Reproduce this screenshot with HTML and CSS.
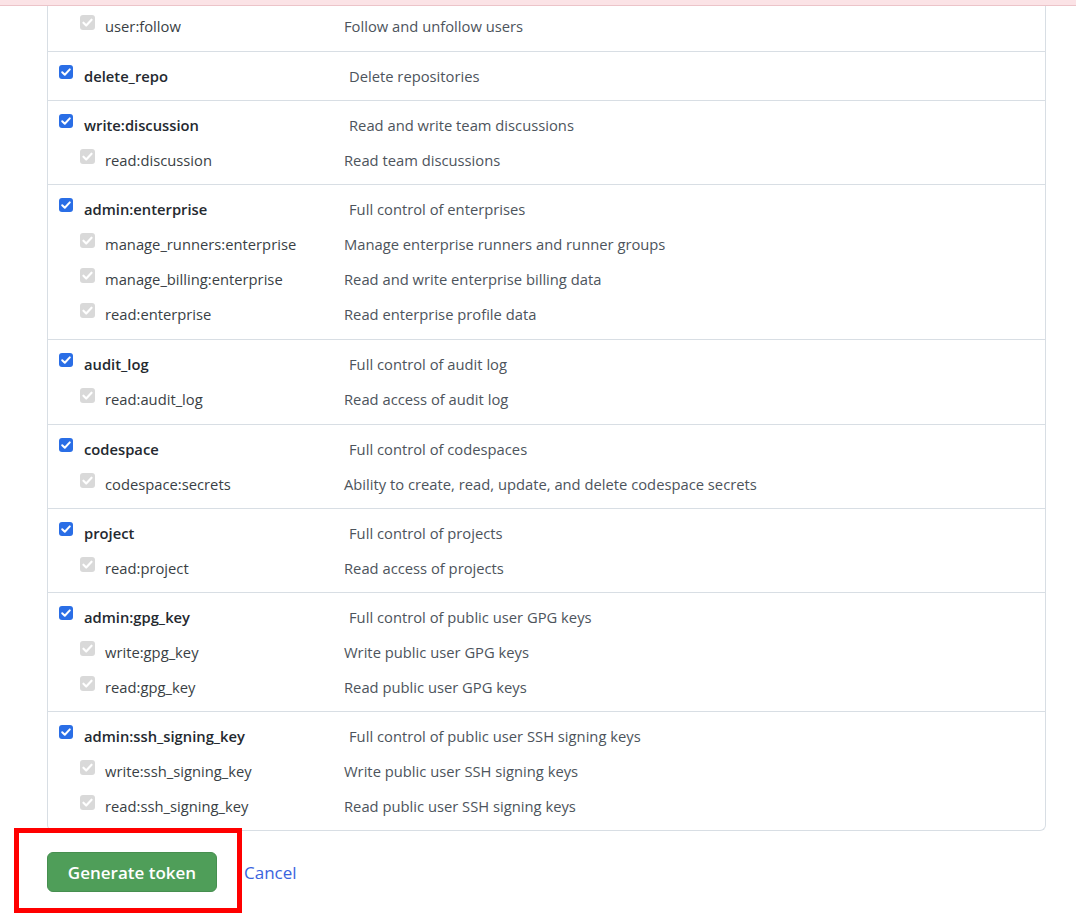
FILE: index.html
```html
<!DOCTYPE html>
<html>
<head>
<meta charset="utf-8">
<link rel="stylesheet" href="styles.css">
</head>
<body>
<div class="topbar"></div>
<div class="scopes">
  <div class="group first">
    <div class="row sub"><span class="cb off"><svg viewBox="0 0 14 14"><path d="M3.2 7.2l2.6 2.6 5-5.4"/></svg></span><span class="name">user:follow</span><span class="desc">Follow and unfollow users</span></div>
  </div>
  <div class="group">
    <div class="row main"><span class="cb on"><svg viewBox="0 0 14 14"><path d="M3.2 7.2l2.6 2.6 5-5.4"/></svg></span><span class="name">delete_repo</span><span class="desc">Delete repositories</span></div>
  </div>
  <div class="group">
    <div class="row main"><span class="cb on"><svg viewBox="0 0 14 14"><path d="M3.2 7.2l2.6 2.6 5-5.4"/></svg></span><span class="name">write:discussion</span><span class="desc">Read and write team discussions</span></div>
    <div class="row sub"><span class="cb off"><svg viewBox="0 0 14 14"><path d="M3.2 7.2l2.6 2.6 5-5.4"/></svg></span><span class="name">read:discussion</span><span class="desc">Read team discussions</span></div>
  </div>
  <div class="group tall">
    <div class="row main"><span class="cb on"><svg viewBox="0 0 14 14"><path d="M3.2 7.2l2.6 2.6 5-5.4"/></svg></span><span class="name">admin:enterprise</span><span class="desc">Full control of enterprises</span></div>
    <div class="row sub"><span class="cb off"><svg viewBox="0 0 14 14"><path d="M3.2 7.2l2.6 2.6 5-5.4"/></svg></span><span class="name">manage_runners:enterprise</span><span class="desc">Manage enterprise runners and runner groups</span></div>
    <div class="row sub"><span class="cb off"><svg viewBox="0 0 14 14"><path d="M3.2 7.2l2.6 2.6 5-5.4"/></svg></span><span class="name">manage_billing:enterprise</span><span class="desc">Read and write enterprise billing data</span></div>
    <div class="row sub"><span class="cb off"><svg viewBox="0 0 14 14"><path d="M3.2 7.2l2.6 2.6 5-5.4"/></svg></span><span class="name">read:enterprise</span><span class="desc">Read enterprise profile data</span></div>
  </div>
  <div class="group tall">
    <div class="row main"><span class="cb on"><svg viewBox="0 0 14 14"><path d="M3.2 7.2l2.6 2.6 5-5.4"/></svg></span><span class="name">audit_log</span><span class="desc">Full control of audit log</span></div>
    <div class="row sub"><span class="cb off"><svg viewBox="0 0 14 14"><path d="M3.2 7.2l2.6 2.6 5-5.4"/></svg></span><span class="name">read:audit_log</span><span class="desc">Read access of audit log</span></div>
  </div>
  <div class="group">
    <div class="row main"><span class="cb on"><svg viewBox="0 0 14 14"><path d="M3.2 7.2l2.6 2.6 5-5.4"/></svg></span><span class="name">codespace</span><span class="desc">Full control of codespaces</span></div>
    <div class="row sub"><span class="cb off"><svg viewBox="0 0 14 14"><path d="M3.2 7.2l2.6 2.6 5-5.4"/></svg></span><span class="name">codespace:secrets</span><span class="desc">Ability to create, read, update, and delete codespace secrets</span></div>
  </div>
  <div class="group">
    <div class="row main"><span class="cb on"><svg viewBox="0 0 14 14"><path d="M3.2 7.2l2.6 2.6 5-5.4"/></svg></span><span class="name">project</span><span class="desc">Full control of projects</span></div>
    <div class="row sub"><span class="cb off"><svg viewBox="0 0 14 14"><path d="M3.2 7.2l2.6 2.6 5-5.4"/></svg></span><span class="name">read:project</span><span class="desc">Read access of projects</span></div>
  </div>
  <div class="group">
    <div class="row main"><span class="cb on"><svg viewBox="0 0 14 14"><path d="M3.2 7.2l2.6 2.6 5-5.4"/></svg></span><span class="name">admin:gpg_key</span><span class="desc">Full control of public user GPG keys</span></div>
    <div class="row sub"><span class="cb off"><svg viewBox="0 0 14 14"><path d="M3.2 7.2l2.6 2.6 5-5.4"/></svg></span><span class="name">write:gpg_key</span><span class="desc">Write public user GPG keys</span></div>
    <div class="row sub"><span class="cb off"><svg viewBox="0 0 14 14"><path d="M3.2 7.2l2.6 2.6 5-5.4"/></svg></span><span class="name">read:gpg_key</span><span class="desc">Read public user GPG keys</span></div>
  </div>
  <div class="group last">
    <div class="row main"><span class="cb on"><svg viewBox="0 0 14 14"><path d="M3.2 7.2l2.6 2.6 5-5.4"/></svg></span><span class="name">admin:ssh_signing_key</span><span class="desc">Full control of public user SSH signing keys</span></div>
    <div class="row sub"><span class="cb off"><svg viewBox="0 0 14 14"><path d="M3.2 7.2l2.6 2.6 5-5.4"/></svg></span><span class="name">write:ssh_signing_key</span><span class="desc">Write public user SSH signing keys</span></div>
    <div class="row sub"><span class="cb off"><svg viewBox="0 0 14 14"><path d="M3.2 7.2l2.6 2.6 5-5.4"/></svg></span><span class="name">read:ssh_signing_key</span><span class="desc">Read public user SSH signing keys</span></div>
  </div>
</div>
<div class="actions">
  <button class="btn-primary">Generate token</button>
  <a class="cancel" href="#">Cancel</a>
  <div class="highlight"></div>
</div>
</body>
</html>
```

FILE: styles.css
```css
html, body {
  margin: 0;
  padding: 0;
  background: #ffffff;
}
body {
  font-family: "Open Sans", "Noto Sans", sans-serif;
  font-size: 14.75px;
  color: #24292f;
  width: 1076px;
  height: 924px;
  overflow: hidden;
}
.topbar {
  height: 5px;
  background: #fbe3e6;
  border-bottom: 1px solid #ecc4c9;
}
.scopes {
  margin-left: 47px;
  width: 997px;
  border: 1px solid #d8dee4;
  border-top: none;
  border-radius: 0 0 6px 6px;
}
.group {
  padding: 6px 0 7px;
  border-bottom: 1px solid #d8dee4;
}
.group.tall {
  padding-bottom: 8px;
}
.group.first {
  padding-top: 2px;
  padding-bottom: 8px;
}
.group.last {
  border-bottom: none;
  padding-bottom: 7px;
}
.row {
  height: 35px;
  display: flex;
  align-items: center;
}
.row.main {
  padding-left: 11px;
}
.row.sub {
  padding-left: 32px;
}
.cb {
  width: 14px;
  height: 14px;
  border-radius: 3px;
  flex: none;
  margin-top: -7px;
  display: flex;
}
.cb svg {
  width: 14px;
  height: 14px;
}
.cb path {
  fill: none;
  stroke: #ffffff;
  stroke-width: 2;
  stroke-linecap: round;
  stroke-linejoin: round;
}
.cb.on {
  background: #2a6ee6;
}
.cb.off {
  background: #d9d9d9;
  width: 15px;
  height: 15px;
}
.cb.off svg {
  width: 15px;
  height: 15px;
}
.name {
  flex: none;
}
.row.main .name {
  width: 265px;
  margin-left: 11px;
  font-weight: 600;
  color: #24292f;
}
.row.sub .name {
  width: 239px;
  margin-left: 10px;
  color: #3a3f45;
}
.desc {
  color: #4d545c;
}
.actions {
  position: relative;
  display: flex;
  align-items: center;
  padding: 21px 0 0 47px;
}
.btn-primary {
  width: 170px;
  height: 40px;
  background: #4f9e59;
  border: 1px solid #468f50;
  border-radius: 6px;
  color: #ffffff;
  font-family: "Open Sans", "Noto Sans", sans-serif;
  font-size: 17px;
  font-weight: 600;
  padding: 0;
}
.cancel {
  margin-left: 27px;
  color: #3a64de;
  font-size: 17px;
  text-decoration: none;
  font-weight: 500;
}
.highlight {
  position: absolute;
  left: 14px;
  top: -3px;
  width: 218px;
  height: 75px;
  border: 5px solid #ff0000;
}
```
